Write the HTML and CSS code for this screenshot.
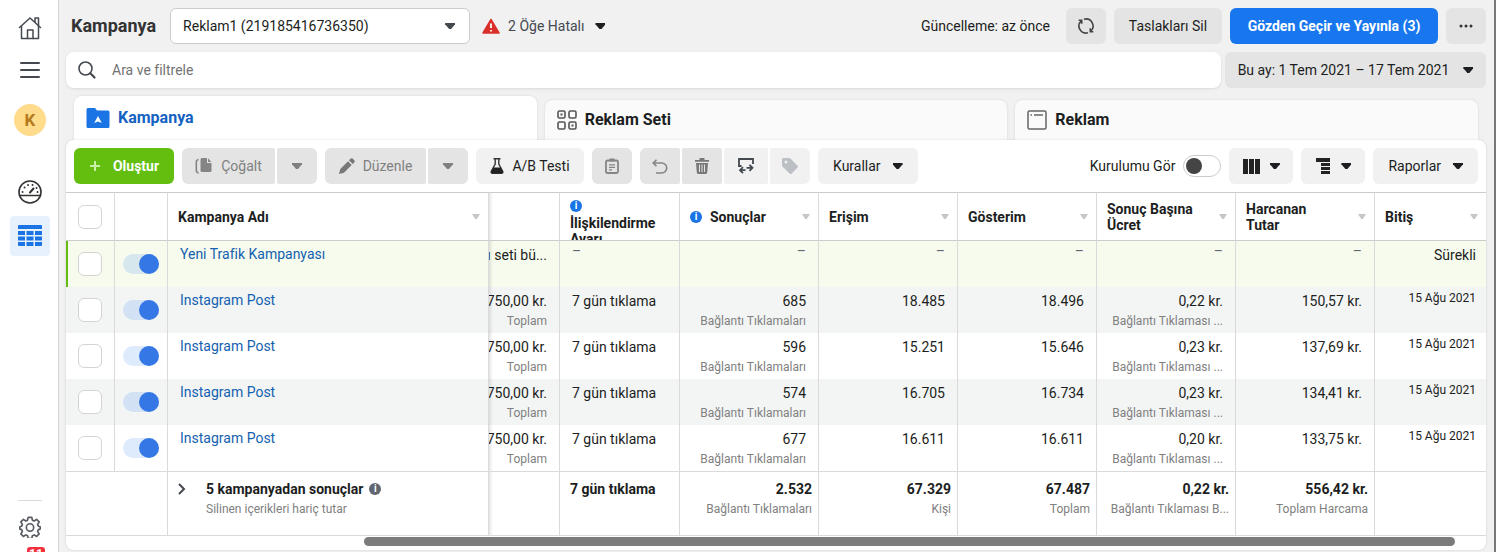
FILE: index.html
```html
<!DOCTYPE html>
<html lang="tr">
  <head>
    <meta charset="UTF-8" />
    <meta name="viewport" content="width=device-width, initial-scale=1.0" />
    <title>Kampanya</title>
    <link rel="stylesheet" href="styles.css">
  </head>

  <body>
    <nav class="sidebar">
      <a href="#" class="side-link" aria-label="Ana sayfa">
        <svg width="24" height="24" viewBox="0 0 24 24" fill="none" stroke="#444950" stroke-width="1.5" stroke-linejoin="round" stroke-linecap="round">
          <path d="M1.5 11.5L12 2l10.500 9.500" /><path d="M3.500 10v12.500h17V10" /><path d="M9.500 22.500v-8.500h5.500v8.500" /><path d="M17 6V2h3.500v7" />
        </svg>
      </a>
      <button class="side-link menu" aria-label="Menü">
        <svg width="20" height="18" viewBox="0 0 20 18" stroke="#444950" stroke-width="2" stroke-linecap="round"><path d="M1 2h18M1 9h18M1 16h18" /></svg>
      </button>
      <a href="#" class="avatar">K</a>
      <a href="#" class="side-link gauge" aria-label="Genel bakış">
        <svg width="24" height="24" viewBox="0 0 24 24" fill="none" stroke="#303236" stroke-width="1.600" stroke-linecap="round">
          <circle cx="12" cy="12" r="11" /><path d="M1.500 15.500h21" /><path d="M12 12.500l3.500-4" stroke-width="2" />
          <path d="M4.500 12h.1M6.500 7.500h.1M10 5h.1M14.500 5h.1M19.500 12h.1M18.500 8h.1" stroke-width="1.800" />
        </svg>
      </a>
      <a href="#" class="side-link current" aria-label="Kampanyalar">
        <svg width="24" height="22" viewBox="0 0 24 22" fill="#1b74e4">
          <path d="M1 0h22a1 1 0 0 1 1 1v3H0V1a1 1 0 0 1 1-1z" />
          <path d="M0 6h7v4H0zM8.500 6h7v4h-7zM17 6h7v4h-7zM0 11.500h7v4H0zM8.500 11.500h7v4h-7zM17 11.500h7v4h-7zM0 17h7v4H1a1 1 0 0 1-1-1zM8.500 17h7v4h-7zM17 17h7v3a1 1 0 0 1-1 1h-6z" />
        </svg>
      </a>
      <div class="sidebar-bottom">
        <a href="#" class="side-link" aria-label="Ayarlar">
          <svg width="22" height="22" viewBox="0 0 24 24" fill="none" stroke="#5a5e64" stroke-width="1.800" stroke-linejoin="round">
            <path d="M10 1.500h4l.6 3 2 .9 2.600-1.700 2.800 2.800-1.700 2.600.8 2 2 .6v2.600l-2 .6-.8 2 1.700 2.600-2.800 2.800-2.600-1.700-2 .9-.6 3h-4l-.6-3-2-.9-2.600 1.700L2 19.500l1.700-2.600-.8-2-2-.6v-2.600l2-.6.8-2L2 6.500l2.800-2.800 2.600 1.700 2-.9z" />
            <circle cx="12" cy="12.500" r="4" />
          </svg>
        </a>
        <div class="alerts"><span>11</span></div>
      </div>
    </nav>

    <main class="main">
      <header class="topbar">
        <h1>Kampanya</h1>
        <div class="account">
          <select aria-label="Reklam hesabı">
            <option>Reklam1 (219185416736350)</option>
          </select>
          <i class="caret"></i>
        </div>
        <button class="errors">
          <svg width="18" height="16" viewBox="0 0 18 16"><path d="M9 1.500L17 15H1z" fill="#d9302c" stroke="#d9302c" stroke-width="1.500" stroke-linejoin="round" /><path d="M9 5.500v4.500M9 12v1.500" stroke="#fff" stroke-width="1.800" /></svg>
          2 Öğe Hatalı
          <i class="caret"></i>
        </button>
        <span class="updated">Güncelleme: az önce</span>
        <button class="btn grey icon" aria-label="Yenile">
          <svg width="18" height="18" viewBox="0 0 18 18" fill="none" stroke="#444" stroke-width="1.600">
            <path d="M7 2.300A7 7 0 0 1 13.700 14.200M11 15.700A7 7 0 0 1 4.300 3.800" />
            <path d="M13.300 11.300V14.700h3M4.700 6.700V3.300h-3" />
          </svg>
        </button>
        <button class="btn grey drafts">Taslakları Sil</button>
        <button class="btn publish">Gözden Geçir ve Yayınla (3)</button>
        <button class="btn grey icon" aria-label="Diğer">
          <svg width="14" height="4" viewBox="0 0 14 4" fill="#333"><circle cx="2" cy="2" r="1.500" /><circle cx="7" cy="2" r="1.500" /><circle cx="12" cy="2" r="1.500" /></svg>
        </button>
      </header>

      <div class="filters">
        <label class="search">
          <svg width="18" height="18" viewBox="0 0 18 18" fill="none" stroke="#444950" stroke-width="1.600" stroke-linecap="round"><circle cx="7.500" cy="7.500" r="6.500" /><path d="M12.300 12.300L16.500 16.500" stroke-width="2.200" /></svg>
          <input type="search" placeholder="Ara ve filtrele" aria-label="Ara ve filtrele" />
        </label>
        <button class="btn grey date">Bu ay: 1 Tem 2021 – 17 Tem 2021 <i class="caret"></i></button>
      </div>

      <div class="tabs">
        <a href="#" class="tab active">
          <svg width="24" height="22" viewBox="0 0 24 22"><path d="M2 1h7l2 2.500h11a1.500 1.500 0 0 1 1.500 1.500v14.500a1.500 1.500 0 0 1-1.500 1.500H2a1.500 1.500 0 0 1-1.500-1.500v-17A1.500 1.500 0 0 1 2 1z" fill="#1b74e4" /><path d="M12 9l3.800 7L12 14.600 8.200 16z" fill="#fff" /></svg>
          Kampanya
        </a>
        <a href="#" class="tab">
          <svg width="20" height="20" viewBox="0 0 20 20" fill="none" stroke="#555" stroke-width="1.600">
            <rect x="1" y="1" width="7" height="7" rx="1.500" /><rect x="12" y="1" width="7" height="7" rx="1.500" /><rect x="1" y="12" width="7" height="7" rx="1.500" /><rect x="12" y="12" width="7" height="7" rx="1.500" />
            <path d="M3.500 4.500h2M14.500 15.500h2" stroke-width="2" />
          </svg>
          Reklam Seti
        </a>
        <a href="#" class="tab">
          <svg width="20" height="20" viewBox="0 0 20 20" fill="none" stroke="#666" stroke-width="1.500"><rect x="1" y="1" width="18" height="18" rx="1.500" /><path d="M3.500 5h1.500M7 5h9" /></svg>
          Reklam
        </a>
      </div>

      <section class="panel">
        <div class="toolbar">
          <button class="btn create">
            <svg width="12" height="12" viewBox="0 0 12 12" stroke="#c9f0a8" stroke-width="2"><path d="M6 1v10M1 6h10" /></svg>
            Oluştur
          </button>
          <div class="group">
            <button class="btn off copy">
              <svg width="18" height="16" viewBox="0 0 18 16" fill="#858585"><path d="M7 0h5v5h4.500v7.500A1.500 1.500 0 0 1 15 14H7a1.500 1.500 0 0 1-1.500-1.500v-11A1.500 1.500 0 0 1 7 0zM13 .3l3.300 3.700H13z" /><path d="M3.500 1.500Q1.300 2 1.300 4v8q0 2.500 2.200 3" fill="none" stroke="#858585" stroke-width="1.600" /></svg>
              Çoğalt
            </button>
            <button class="btn off icon" aria-label="Çoğaltma seçenekleri"><i class="caret"></i></button>
          </div>
          <div class="group">
            <button class="btn off edit">
              <svg width="16" height="16" viewBox="0 0 16 16" fill="#777"><path d="M0 16l1.300-5 7.700-7.700L12.700 7 5 14.700zM10 2.300L11.800.6q.9-.8 1.800 0l1.800 1.800q.8.900 0 1.800L13.700 6z" /></svg>
              Düzenle
            </button>
            <button class="btn off icon" aria-label="Düzenleme seçenekleri"><i class="caret"></i></button>
          </div>
          <button class="btn light test">
            <svg width="14" height="16" viewBox="0 0 14 16"><path d="M3.500.8h7M5.200 1v5L1.200 13.500q-.4 1.700 1.300 1.700h9q1.700 0 1.300-1.700L8.800 6V1" fill="none" stroke="#333" stroke-width="1.400" /><path d="M3.500 9.500h7l2.500 4.500q0 1.300-1.500 1.300h-9Q1 15.300 1 14z" fill="#222" /></svg>
            A/B Testi
          </button>
          <button class="btn off icon" aria-label="Yapıştır">
            <svg width="14" height="16" viewBox="0 0 14 16" fill="none" stroke="#858585" stroke-width="1.800"><rect x="1" y="2.500" width="12" height="12.500" rx="1.500" /><path d="M4.500 2h5" stroke-width="3" /><path d="M4 6.800h6M4 9.300h6M4 11.800h3" stroke-width="1.200" /></svg>
          </button>
          <div class="group">
            <button class="btn off icon" aria-label="Geri al">
              <svg width="16" height="15" viewBox="0 0 16 15" fill="none" stroke="#858585" stroke-width="1.600"><path d="M4.500.7L1.200 4l3.300 3.300M1.200 4h8.500a5 5 0 0 1 0 10H4" /></svg>
            </button>
            <button class="btn off icon" aria-label="Sil">
              <svg width="14" height="16" viewBox="0 0 14 16"><path d="M0 2h14v1.800H0zM4.500 0h5v2h-5z" fill="#777" /><path d="M1 5h12l-.8 9.600q-.1 1.400-1.400 1.400H3.200q-1.300 0-1.400-1.400z" fill="#777" /><path d="M4.500 6.500v7.500M7 6.500v7.500M9.500 6.500v7.500" stroke="#e4e4e4" stroke-width="1" /></svg>
            </button>
            <button class="btn light swap" aria-label="Dışa ve içe aktar">
              <svg width="16" height="16" viewBox="0 0 16 16" fill="none" stroke="#444950" stroke-width="1.800"><path d="M3.500 8H1V1h14v5" /><path d="M7.500 12.200H2M5 9.200l-3 3 3 3M8.500 9.800h6M11.500 6.800l3 3-3 3" /></svg>
            </button>
            <button class="btn light icon" aria-label="Etiket">
              <svg width="16" height="16" viewBox="0 0 16 16"><path d="M1.500 0H7q1 0 1.700.7l6.700 6.800q1.100 1.100 0 2.200l-5.700 5.700q-1.100 1.100-2.200 0L.7 8.700Q0 8 0 7V1.500Q0 0 1.500 0z" fill="#bcc0c4" /><circle cx="4" cy="4" r="1.500" fill="#f1f1f1" /></svg>
            </button>
          </div>
          <button class="btn light">Kurallar <i class="caret"></i></button>

          <label class="setup">Kurulumu Gör <input type="checkbox" class="switch" /></label>
          <button class="btn light view" aria-label="Sütunlar">
            <svg width="17" height="15" viewBox="0 0 17 15" fill="#222"><path d="M0 0h5v15H0zM6 0h5v15H6zM12 0h5v15h-5z" /></svg>
            <i class="caret"></i>
          </button>
          <button class="btn light view" aria-label="Dökümler">
            <svg width="16" height="16" viewBox="0 0 16 16" fill="#222"><path d="M1 0h14v4H1zM6 5h9v3H6zM6 9h9v3H6zM6 13h9v3H6z" /></svg>
            <i class="caret"></i>
          </button>
          <button class="btn light">Raporlar <i class="caret"></i></button>
        </div>

        <table class="grid">
          <colgroup>
            <col class="c-check" /><col class="c-switch" /><col /><col class="c-budget" /><col class="c-window" />
            <col class="c-num" /><col class="c-num" /><col class="c-num" /><col class="c-num" /><col class="c-num" />
            <col class="c-end" />
          </colgroup>
          <thead>
            <tr>
              <th><input type="checkbox" class="check" aria-label="Tümünü seç" /></th>
              <th></th>
              <th><div class="head">Kampanya Adı <i class="sort"></i></div></th>
              <th class="budget"></th>
              <th><div class="head stacked"><i class="info">i</i>İlişkilendirme Ayarı</div></th>
              <th><div class="head"><i class="info">i</i>Sonuçlar <i class="sort"></i></div></th>
              <th><div class="head">Erişim <i class="sort"></i></div></th>
              <th><div class="head">Gösterim <i class="sort"></i></div></th>
              <th><div class="head"><span>Sonuç Başına Ücret</span> <i class="sort"></i></div></th>
              <th><div class="head"><span>Harcanan<br />Tutar</span> <i class="sort"></i></div></th>
              <th><div class="head end">Bitiş <i class="sort"></i></div></th>
            </tr>
          </thead>
          <tbody>
            <tr class="draft">
              <td class="pick"><input type="checkbox" class="check" aria-label="Seç" /></td>
              <td class="pick"><input type="checkbox" class="toggle" aria-label="Açık" checked /></td>
              <td class="name"><a href="#">Yeni Trafik Kampanyası</a></td>
              <td class="budget"><div>ı seti bü...</div></td>
              <td class="window none">–</td>
              <td class="none">–</td>
              <td class="none">–</td>
              <td class="none">–</td>
              <td class="none">–</td>
              <td class="none">–</td>
              <td class="ends">Sürekli</td>
            </tr>
            <tr>
              <td class="pick"><input type="checkbox" class="check" aria-label="Seç" /></td>
              <td class="pick"><input type="checkbox" class="toggle" aria-label="Açık" checked /></td>
              <td class="name"><a href="#">Instagram Post</a></td>
              <td class="budget"><div>750,00 kr.</div><small>Toplam</small></td>
              <td class="window">7 gün tıklama</td>
              <td>685<small>Bağlantı Tıklamaları</small></td>
              <td>18.485</td>
              <td>18.496</td>
              <td>0,22 kr.<small>Bağlantı Tıklaması ...</small></td>
              <td>150,57 kr.</td>
              <td class="ends date-cell">15 Ağu 2021</td>
            </tr>
            <tr>
              <td class="pick"><input type="checkbox" class="check" aria-label="Seç" /></td>
              <td class="pick"><input type="checkbox" class="toggle" aria-label="Açık" checked /></td>
              <td class="name"><a href="#">Instagram Post</a></td>
              <td class="budget"><div>750,00 kr.</div><small>Toplam</small></td>
              <td class="window">7 gün tıklama</td>
              <td>596<small>Bağlantı Tıklamaları</small></td>
              <td>15.251</td>
              <td>15.646</td>
              <td>0,23 kr.<small>Bağlantı Tıklaması ...</small></td>
              <td>137,69 kr.</td>
              <td class="ends date-cell">15 Ağu 2021</td>
            </tr>
            <tr>
              <td class="pick"><input type="checkbox" class="check" aria-label="Seç" /></td>
              <td class="pick"><input type="checkbox" class="toggle" aria-label="Açık" checked /></td>
              <td class="name"><a href="#">Instagram Post</a></td>
              <td class="budget"><div>750,00 kr.</div><small>Toplam</small></td>
              <td class="window">7 gün tıklama</td>
              <td>574<small>Bağlantı Tıklamaları</small></td>
              <td>16.705</td>
              <td>16.734</td>
              <td>0,23 kr.<small>Bağlantı Tıklaması ...</small></td>
              <td>134,41 kr.</td>
              <td class="ends date-cell">15 Ağu 2021</td>
            </tr>
            <tr>
              <td class="pick"><input type="checkbox" class="check" aria-label="Seç" /></td>
              <td class="pick"><input type="checkbox" class="toggle" aria-label="Açık" checked /></td>
              <td class="name"><a href="#">Instagram Post</a></td>
              <td class="budget"><div>750,00 kr.</div><small>Toplam</small></td>
              <td class="window">7 gün tıklama</td>
              <td>677<small>Bağlantı Tıklamaları</small></td>
              <td>16.611</td>
              <td>16.611</td>
              <td>0,20 kr.<small>Bağlantı Tıklaması ...</small></td>
              <td>133,75 kr.</td>
              <td class="ends date-cell">15 Ağu 2021</td>
            </tr>
          </tbody>
          <tfoot>
            <tr>
              <td colspan="2"></td>
              <td class="summary">
                <div class="total">
                  <button class="expand" aria-label="Genişlet">
                    <svg width="8" height="12" viewBox="0 0 8 12" fill="none" stroke="#444950" stroke-width="2"><path d="M1 1l5 5-5 5" /></svg>
                  </button>
                  <div>
                    <div class="count">5 kampanyadan sonuçlar <i class="info dark">i</i></div>
                    <small>Silinen içerikleri hariç tutar</small>
                  </div>
                </div>
              </td>
              <td class="budget"></td>
              <td class="window">7 gün tıklama</td>
              <td>2.532<small>Bağlantı Tıklamaları</small></td>
              <td>67.329<small>Kişi</small></td>
              <td>67.487<small>Toplam</small></td>
              <td>0,22 kr.<small>Bağlantı Tıklaması B...</small></td>
              <td>556,42 kr.<small>Toplam Harcama</small></td>
              <td></td>
            </tr>
          </tfoot>
        </table>
        <div class="scroll"><div class="thumb"></div></div>
      </section>
    </main>
  </body>
</html>
```

FILE: styles.css
```css
* {
  margin: 0;
  padding: 0;
  box-sizing: border-box;
}

body {
  display: flex;
  height: 100vh;
  overflow: hidden;
  font-family: Roboto, "Liberation Sans", sans-serif;
  font-size: 14px;
  line-height: 20px;
  color: #1c1e21;
  background: #f1f1f1;
}

button,
input,
select {
  font: inherit;
  color: inherit;
}

button {
  border: none;
  background: none;
  cursor: pointer;
}

a {
  text-decoration: none;
}

svg {
  flex: none;
}

/* sidebar */
.sidebar {
  flex: none;
  width: 59px;
  display: flex;
  flex-direction: column;
  align-items: center;
  padding: 8px 0 0 2px;
  background: #fff;
  border-right: 1px solid #d4d4d4;
}

.side-link {
  display: flex;
  align-items: center;
  justify-content: center;
  width: 40px;
  height: 40px;
  border-radius: 4px;
}

.menu {
  margin-top: 2px;
}

.avatar {
  width: 32px;
  height: 32px;
  margin-top: 14px;
  border-radius: 50%;
  background: #ffdb8c;
  color: #b57a1c;
  font-size: 17px;
  font-weight: bold;
  line-height: 32px;
  text-align: center;
}

.gauge {
  margin-top: 36px;
}

.current {
  margin-top: 4px;
  background: #e7f1fe;
}

.sidebar-bottom {
  margin-top: auto;
  display: flex;
  flex-direction: column;
  align-items: center;
}

.sidebar-bottom::before {
  content: "";
  width: 24px;
  height: 1px;
  margin-bottom: 6px;
  background: #dadada;
}

.alerts {
  height: 5px;
  overflow: hidden;
  padding-left: 12px;
}

.alerts span {
  display: block;
  width: 18px;
  height: 16px;
  border-radius: 3px;
  background: #f5303e;
  color: #fff;
  font-size: 12px;
  font-weight: bold;
  line-height: 14px;
  text-align: center;
}

/* top rows */
.main {
  flex: 1;
  min-width: 0;
  display: flex;
  flex-direction: column;
  padding: 8px 8px 0 7px;
  border-right: 2px solid #777;
}

.topbar {
  display: flex;
  align-items: center;
  gap: 8px;
  margin-bottom: 8px;
}

h1 {
  padding: 0 6px 0 5px;
  font-size: 18px;
  color: #333;
}

.account {
  position: relative;
  width: 300px;
}

.account select {
  width: 100%;
  height: 36px;
  padding: 0 12px;
  border: 1px solid #ccc;
  border-radius: 6px;
  background: #fff;
  appearance: none;
}

.account .caret {
  position: absolute;
  top: 15px;
  right: 15px;
  background: #444950;
  pointer-events: none;
}

.caret {
  flex: none;
  display: block;
  width: 10px;
  height: 6px;
  background: currentColor;
  clip-path: polygon(0 0, 100% 0, 100% 20%, 60% 100%, 40% 100%, 0 20%);
}

.errors {
  display: flex;
  align-items: center;
  gap: 8px;
  padding-left: 4px;
  color: #444950;
}

.errors .caret {
  margin-left: 3px;
  background: #1c1e21;
}

.updated {
  margin-left: auto;
  padding-right: 8px;
}

.btn {
  display: flex;
  align-items: center;
  justify-content: center;
  gap: 12px;
  height: 36px;
  padding: 0 15px;
  border-radius: 6px;
  white-space: nowrap;
}

.icon {
  width: 40px;
  padding: 0;
}

.grey {
  background: #e4e4e4;
}

.light {
  background: #f1f1f1;
}

.off {
  background: #e4e4e4;
  color: #808080;
}

.drafts {
  width: 108px;
}

.publish {
  width: 208px;
  background: #1877ee;
  color: #fff;
  font-weight: bold;
}

.create {
  width: 100px;
  background: #63be0f;
  color: #fff;
  font-weight: bold;
}

.filters {
  display: flex;
  gap: 4px;
  margin-bottom: 8px;
}

.search {
  flex: 1;
  display: flex;
  align-items: center;
  gap: 16px;
  padding: 0 12px;
  border-radius: 8px;
  background: #fff;
  box-shadow: 0 1px 3px rgba(0, 0, 0, 0.1);
}

.search input {
  flex: 1;
  border: none;
  outline: none;
  background: none;
}

.search input::placeholder {
  color: #737373;
}

.date {
  width: 261px;
  gap: 14px;
  padding: 0 12px;
}

/* tabs */
.tabs {
  display: grid;
  grid-template-columns: repeat(3, 1fr);
  gap: 8px;
  align-items: end;
  padding: 0 8px;
}

.tab {
  display: flex;
  align-items: center;
  gap: 8px;
  height: 40px;
  padding: 0 12px;
  border-radius: 8px 8px 0 0;
  background: #fafafa;
  box-shadow: 0 0 3px rgba(0, 0, 0, 0.1);
  color: #1c1e21;
  font-size: 16px;
  font-weight: bold;
}

.tab.active {
  height: 44px;
  background: #fff;
  color: #1461c2;
}

/* panel */
.panel {
  position: relative;
  background: #fff;
  border-radius: 8px;
  box-shadow: 0 0 3px rgba(0, 0, 0, 0.12);
}

.toolbar {
  display: flex;
  gap: 8px;
  padding: 8px;
}

.group {
  display: flex;
  gap: 2px;
}

.group .btn {
  border-radius: 2px;
}

.group .btn:first-child {
  border-radius: 6px 2px 2px 6px;
}

.group .btn:last-child {
  border-radius: 2px 6px 6px 2px;
}

.off,
.test {
  gap: 8px;
  padding: 0 12px;
}

.copy {
  width: 93px;
}

.edit {
  width: 101px;
}

.test {
  width: 108px;
}

.off.icon {
  padding: 0;
}

.swap {
  width: 44px;
  padding: 0;
}

.light.icon {
  padding: 0;
}

.view {
  width: 64px;
  gap: 10px;
  padding: 0;
}

.setup {
  display: flex;
  align-items: center;
  gap: 8px;
  margin-left: auto;
}

.switch {
  width: 38px;
  height: 22px;
  padding: 2px;
  border: 1px solid #ccc;
  border-radius: 11px;
  appearance: none;
}

.switch::before {
  content: "";
  display: block;
  width: 16px;
  height: 16px;
  border-radius: 50%;
  background: #444;
}

/* table */
.grid {
  width: 100%;
  table-layout: fixed;
  border-collapse: separate;
  border-spacing: 0;
}

.c-check { width: 49px; }
.c-switch { width: 53px; }
.c-budget { width: 71px; }
.c-window { width: 120px; }
.c-num { width: 139px; }
.c-end { width: 111px; }

th,
td {
  border-right: 1px solid #dadada;
}

th:last-child,
td:last-child {
  border-right: none;
}

th {
  height: 49px;
  border-top: 1px solid #ccc;
  border-bottom: 1px solid #ccc;
  line-height: 16px;
  vertical-align: middle;
}

.head {
  display: flex;
  align-items: center;
  height: 47px;
  padding: 0 8px 0 10px;
  overflow: hidden;
  text-align: left;
}

.stacked {
  display: block;
  padding-top: 7px;
}

.stacked .info {
  display: block;
  margin-bottom: 3px;
}

.sort {
  flex: none;
  width: 8px;
  height: 5px;
  margin-left: auto;
  background: #c4c6c9;
  clip-path: polygon(0 0, 100% 0, 60% 100%, 40% 100%);
}

.info {
  flex: none;
  display: inline-block;
  width: 12px;
  height: 12px;
  margin-right: 8px;
  border-radius: 50%;
  background: #1b74e4;
  color: #fff;
  font-size: 10px;
  font-style: normal;
  font-weight: bold;
  line-height: 12px;
  text-align: center;
}

.info.dark {
  margin: 0;
  background: #606770;
}

td {
  height: 46px;
  padding: 4px 12px 0;
  text-align: right;
  vertical-align: top;
  white-space: nowrap;
}

small {
  display: block;
  color: #808080;
  font-size: 12px;
  font-weight: normal;
}

tbody tr:nth-child(even) {
  background: #f3f5f5;
}

.draft {
  background: #f7fbee;
}

.draft td:first-child {
  box-shadow: inset 2px 0 #63be0f;
}

.pick {
  padding: 0;
  vertical-align: middle;
}

.check {
  display: block;
  width: 24px;
  height: 24px;
  margin: 0 auto;
  border: 1px solid #d4d4d4;
  border-radius: 6px;
  background: #fff;
  appearance: none;
}

.toggle {
  display: block;
  width: 36px;
  height: 20px;
  margin: 0 auto;
  border-radius: 10px;
  background: rgba(24, 119, 242, 0.15);
  appearance: none;
}

.toggle::before {
  content: "";
  display: block;
  width: 20px;
  height: 20px;
  margin-left: auto;
  border-radius: 50%;
  background: #3578e5;
}

.name {
  padding-top: 3px;
  text-align: left;
}

.name a {
  color: #1461b0;
}

.budget {
  padding-left: 0;
  background: linear-gradient(to right, rgba(0, 0, 0, 0.1), transparent 4px);
}

.budget div {
  display: flex;
  justify-content: flex-end;
  overflow: hidden;
}

.window {
  text-align: left;
}

.none {
  padding-top: 0;
  color: #606770;
}

.ends {
  padding-right: 10px;
}

.date-cell {
  padding-top: 1px;
  font-size: 12px;
}

tfoot td {
  height: 65px;
  padding: 7px 6px 0 10px;
  border-top: 1px solid #dadada;
  border-bottom: 1px solid #dadada;
  font-weight: bold;
}

.total {
  display: flex;
  align-items: flex-start;
  text-align: left;
}

.count {
  display: flex;
  align-items: center;
  gap: 6px;
}

.expand {
  display: flex;
  align-items: center;
  width: 28px;
  height: 20px;
}

.scroll {
  height: 14px;
  padding: 1px 31px 0 21%;
}

.thumb {
  height: 9px;
  border-radius: 5px;
  background: #7b7b7b;
}
```
